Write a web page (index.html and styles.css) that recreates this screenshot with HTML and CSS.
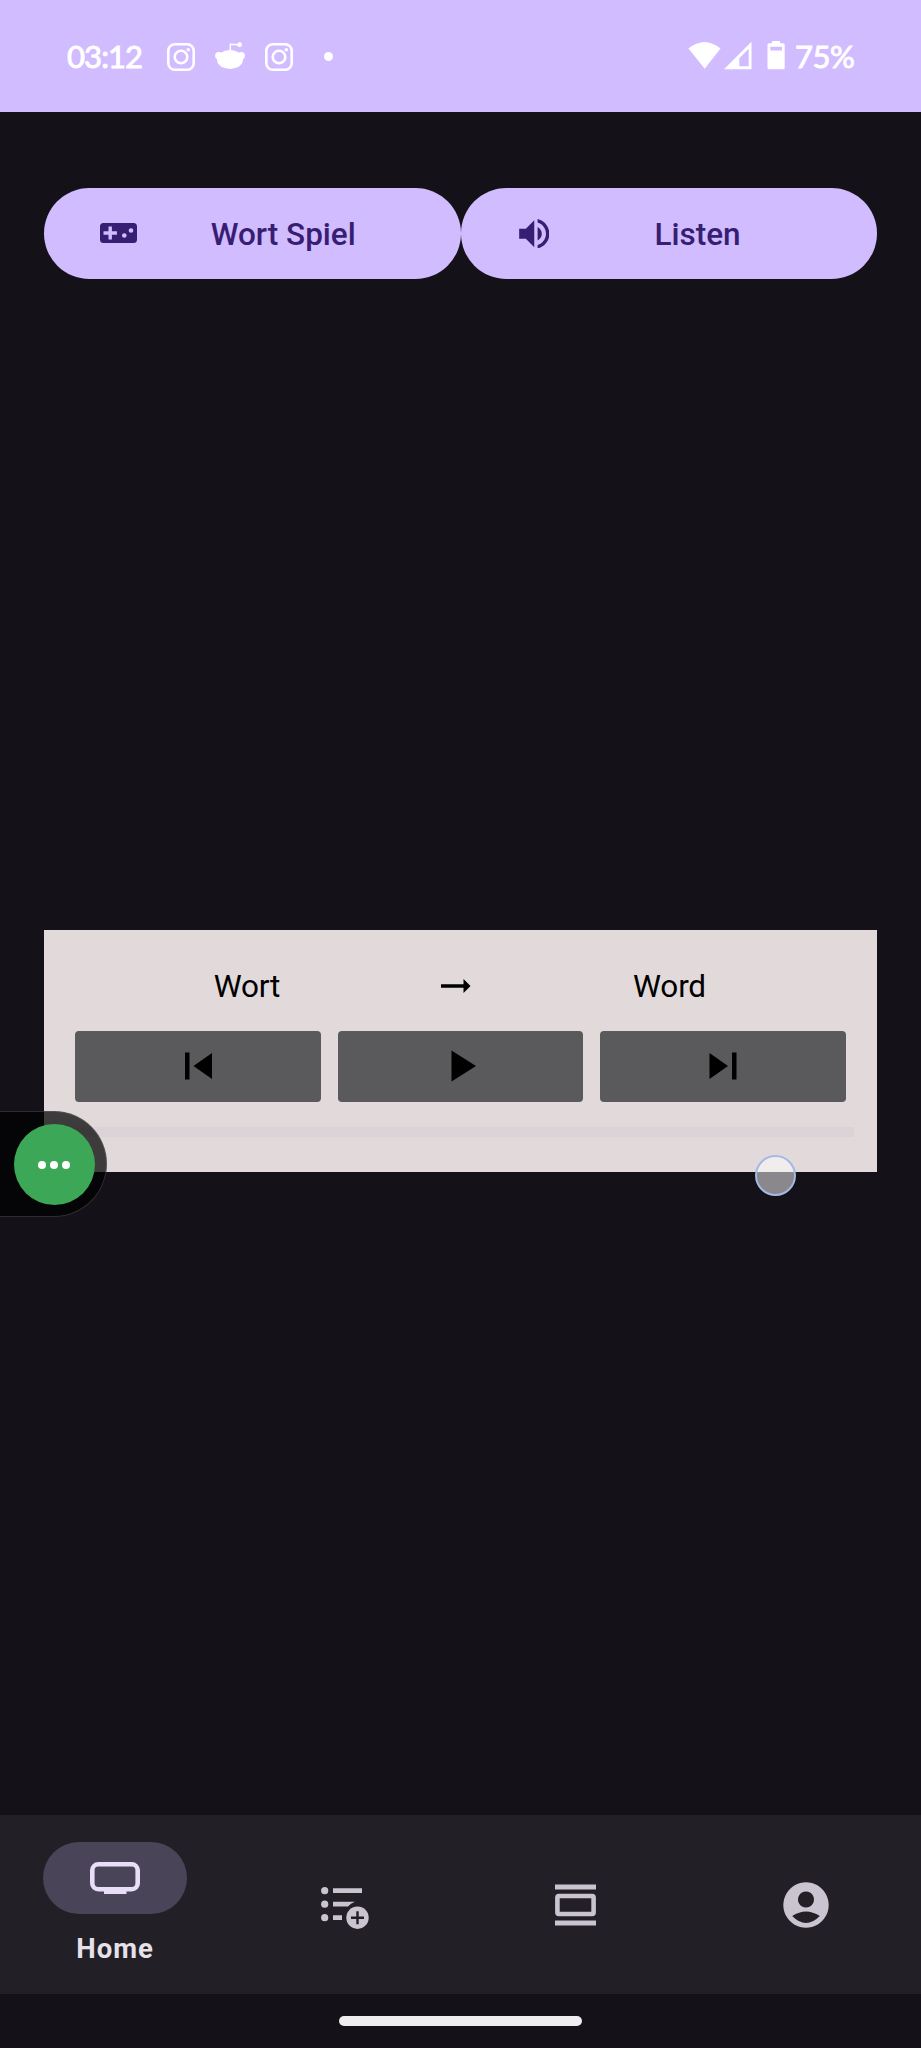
FILE: index.html
```html
<!DOCTYPE html>
<html lang="de">
<head>
<meta charset="utf-8">
<title>Home</title>
<link rel="stylesheet" href="styles.css">
</head>
<body>
<div class="screen">
  <header class="status">
    <span class="clock">03:12</span>
    <svg class="insta" viewBox="0 0 28 28"><rect x="1.3" y="1.3" width="25.4" height="25.4" rx="6.5"/><circle cx="14" cy="14" r="6.3"/><circle class="solid" cx="21.3" cy="6.8" r="1.8"/></svg>
    <svg class="reddit" viewBox="0 0 30 28"><ellipse cx="15" cy="17.5" rx="13" ry="9.5"/><circle cx="3.8" cy="13.7" r="3.7"/><circle cx="26.2" cy="13.7" r="3.7"/><path class="stem" d="M15.3 9.5V2.2L23 2.8"/><circle cx="24.6" cy="2.7" r="2.4"/></svg>
    <svg class="insta" viewBox="0 0 28 28"><rect x="1.3" y="1.3" width="25.4" height="25.4" rx="6.5"/><circle cx="14" cy="14" r="6.3"/><circle class="solid" cx="21.3" cy="6.8" r="1.8"/></svg>
    <span class="more-dot"></span>
    <div class="system">
      <svg class="signals" viewBox="0 0 98 30"><path d="M0.5 7.5Q16.5-5.5 32.5 7.5L16.7 27.7Z"/><path fill-rule="evenodd" d="M36 28.2L63.5 0.7V28.2ZM51.3 25.2H60.7V7.8L51.3 17.2Z"/><path fill-rule="evenodd" d="M84 0h8v2.2h3.2q1.5 0 1.5 1.5v23q0 1.5-1.5 1.5H81q-1.5 0-1.5-1.5v-23q0-1.5 1.5-1.5h3ZM82.3 5.8v3.8h11.6V5.8Z"/></svg>
      <span class="battery">75%</span>
    </div>
  </header>

  <main class="content">
    <div class="actions">
      <button class="action">
        <svg class="game" viewBox="0 0 37 20"><path fill-rule="evenodd" d="M3.5 0h30A3.5 3.5 0 0 1 37 3.5v13a3.5 3.5 0 0 1-3.5 3.5h-30A3.5 3.5 0 0 1 0 16.500v-13A3.500 3.500 0 0 1 3.500 0ZM8.500 3.500v4.800H3.500v3.400h5v4.800h3.400v-4.800h5V8.300h-5V3.500ZM24.300 10.200a2.300 2.300 0 1 0 .01 0ZM31 5.200a2.300 2.300 0 1 0 .01 0Z"/></svg>
        <span class="action-label">Wort Spiel</span>
      </button>
      <button class="action">
        <svg class="speaker" viewBox="3 3.200 18 17.600"><path d="M3 9v6h4l5 5V4L7 9H3zm13.500 3c0-1.770-1.020-3.290-2.500-4.030v8.050c1.480-.73 2.500-2.250 2.500-4.020zM14 3.230v2.060c2.890.86 5 3.540 5 6.710s-2.110 5.850-5 6.710v2.060c4.010-.91 7-4.490 7-8.770s-2.990-7.860-7-8.770z"/></svg>
        <span class="action-label">Listen</span>
      </button>
    </div>

    <section class="player">
      <div class="words">
        <span class="word">Wort</span>
        <svg class="arrow" viewBox="0 0 30 14"><path d="M0 5.300H22.500V0L29.500 7L22.500 14V8.700H0Z"/></svg>
        <span class="word">Word</span>
      </div>
      <div class="controls">
        <button class="control"><svg viewBox="0 0 54 54"><path d="M14 13.500h4.500v27H14zM22.500 27L41 14v26Z"/></svg></button>
        <button class="control"><svg viewBox="0 0 54 54"><path d="M18.500 11.500L43 27L18.500 42.500Z"/></svg></button>
        <button class="control"><svg viewBox="0 0 54 54"><path d="M13.500 14L32 27L13.500 40zM36 13.500h4.500v27H36z"/></svg></button>
      </div>
      <div class="track"></div>
      <span class="touch"></span>
    </section>
  </main>

  <nav class="tabs">
    <a class="tab active">
      <span class="pill"><svg class="tv" viewBox="0 0 50 32"><rect x="2.300" y="2.300" width="45.400" height="24.900" rx="6"/><path d="M14 26h22.500v6H14z"/></svg></span>
      <span class="tab-label">Home</span>
    </a>
    <a class="tab">
      <svg class="list" viewBox="0 0 48 42"><circle cx="3.700" cy="3.700" r="3.600"/><circle cx="3.700" cy="17.200" r="3.600"/><circle cx="3.700" cy="30.700" r="3.600"/><path d="M12 1.300h29v4.800H12zM12 14.800h22q-4.500 1.500-7 4.700H12zM12 28.300h9v4.800h-9z"/><circle cx="36.500" cy="30.700" r="11.200"/><path class="plus" d="M30 30.700h13M36.500 24.200v13"/></svg>
    </a>
    <a class="tab">
      <svg class="carousel" viewBox="0 0 41 42"><path d="M0 .5h41v5H0zM0 36.500h41v5H0z"/><rect x="2.400" y="12" width="36.200" height="18" rx="1.500"/></svg>
    </a>
    <a class="tab">
      <svg class="account" viewBox="0 0 46 46"><path fill-rule="evenodd" d="M23 .3a22.700 22.700 0 1 0 .01 0ZM23 9.500a8 8 0 1 1-.01 0ZM9.200 34Q23 25 36.800 34Q30 41 23 41T9.200 34Z"/></svg>
    </a>
  </nav>
  <footer class="gesture"><span class="handle"></span></footer>

  <div class="bubble"><span class="bubble-core"><i></i><i></i><i></i></span></div>
</div>
</body>
</html>
```
FILE: styles.css
```css
* { box-sizing: border-box; }
body { margin: 0; background: #141118; font-family: Roboto, "Noto Sans", sans-serif; }
button { border: 0; margin: 0; font: inherit; }
svg { display: block; flex: none; }
.screen { position: relative; display: flex; flex-direction: column; width: 921px; height: 2048px; overflow: hidden; background: #141118; }

.status { display: flex; align-items: center; height: 112.400px; padding: 0 66px 0 66px; background: #d1bcff; color: #fff; font-family: Lato, sans-serif; font-weight: 400; font-size: 31px; -webkit-text-stroke: 0.900px #fff; }
.clock { width: 101px; padding-left: 1px; line-height: 40px; letter-spacing: -0.900px; }
.insta { width: 28px; height: 28px; margin-top: 1px; fill: none; stroke: #fff; stroke-width: 2.600; }
.insta .solid { fill: #fff; stroke: none; }
.reddit { width: 30px; height: 28px; margin: 0 20px 0 20px; fill: #fff; }
.reddit .stem { fill: none; stroke: #fff; stroke-width: 1.500; }
.more-dot { width: 9px; height: 9px; margin-left: 31px; border-radius: 50%; background: #fff; }
.system { display: flex; align-items: center; margin-left: auto; }
.signals { width: 98px; height: 30px; fill: #fff; }
.battery { width: 60px; margin-left: 9px; line-height: 40px; letter-spacing: -0.500px; white-space: nowrap; }

.content { flex: 1; padding: 75.600px 44px 0; }
.actions { display: flex; }
.action { display: flex; align-items: center; flex: 1; height: 91px; padding: 0 56px; border-radius: 46px; background: #d1bcff; color: #371e73; fill: #371e73; }
.action-label { flex: 1; text-align: center; font-size: 31.500px; font-weight: 500; letter-spacing: 0; line-height: 40px; padding: 3px 0 0 25px; white-space: nowrap; }
.game { width: 37px; height: 20px; }
.speaker { width: 30.500px; height: 29.500px; margin-left: 2px; }

.player { position: relative; height: 242px; margin-top: 651px; padding: 36px 23px 0; background: #e2dada; }
.words { display: grid; grid-template-columns: 360px 30px 369px; gap: 14px; align-items: center; height: 40px; }
.word { text-align: center; font-size: 31.500px; line-height: 40px; padding-top: 1px; color: #000; letter-spacing: -0.200px; }
.arrow { width: 30px; height: 14px; margin-top: -1px; }
.controls { display: grid; grid-template-columns: repeat(3, 1fr); gap: 17px; margin-top: 25px; padding: 0 8px; }
.control { display: flex; align-items: center; justify-content: center; height: 71px; padding: 0; border-radius: 4px; background: #5a595b; }
.control svg { width: 54px; height: 54px; fill: #000; }
.track { height: 10px; margin-top: 25px; background: #dcd3d8; }
.touch { position: absolute; left: 710.500px; top: 225px; width: 41px; height: 41px; border: 2px solid #a4b9e5; border-radius: 50%; background: rgba(255, 255, 255, 0.500); }

.tabs { display: grid; grid-template-columns: repeat(4, 1fr); height: 179px; background: #221f26; fill: #cac4d0; }
.tab { display: flex; flex-direction: column; align-items: center; justify-content: center; }
.tab.active { justify-content: flex-start; padding-top: 27px; }
.pill { display: flex; align-items: center; justify-content: center; width: 143.500px; height: 72px; border-radius: 36px; background: #4a4458; }
.tv { width: 50px; height: 32px; fill: #e8def8; }
.tv rect { fill: none; stroke: #e8def8; stroke-width: 4.600; }
.tab-label { margin-top: 18px; font-size: 27.500px; line-height: 34px; font-weight: 700; letter-spacing: 1px; color: #e6e0e9; }
.list { width: 48px; height: 42px; margin-top: 7px; }
.plus { fill: none; stroke: #221f26; stroke-width: 2.400; }
.carousel { width: 41px; height: 42px; }
.carousel rect { fill: none; stroke: #cac4d0; stroke-width: 4.600; }
.account { width: 46px; height: 46px; }

.gesture { display: flex; justify-content: center; height: 54px; padding-top: 22px; }
.handle { width: 243px; height: 10px; border-radius: 5px; background: #efedf0; }

.bubble { position: absolute; left: -2px; top: 1111px; width: 109px; height: 106px; padding: 12px 0 0 14.500px; border: 1px solid rgba(120, 120, 125, 0.350); border-radius: 0 53px 53px 0; background: rgba(0, 0, 0, 0.730); }
.bubble-core { display: flex; align-items: center; justify-content: center; gap: 4px; width: 81px; height: 81px; border-radius: 50%; background: #3ba757; }
.bubble-core i { width: 8px; height: 8px; border-radius: 50%; background: #fff; }
```
